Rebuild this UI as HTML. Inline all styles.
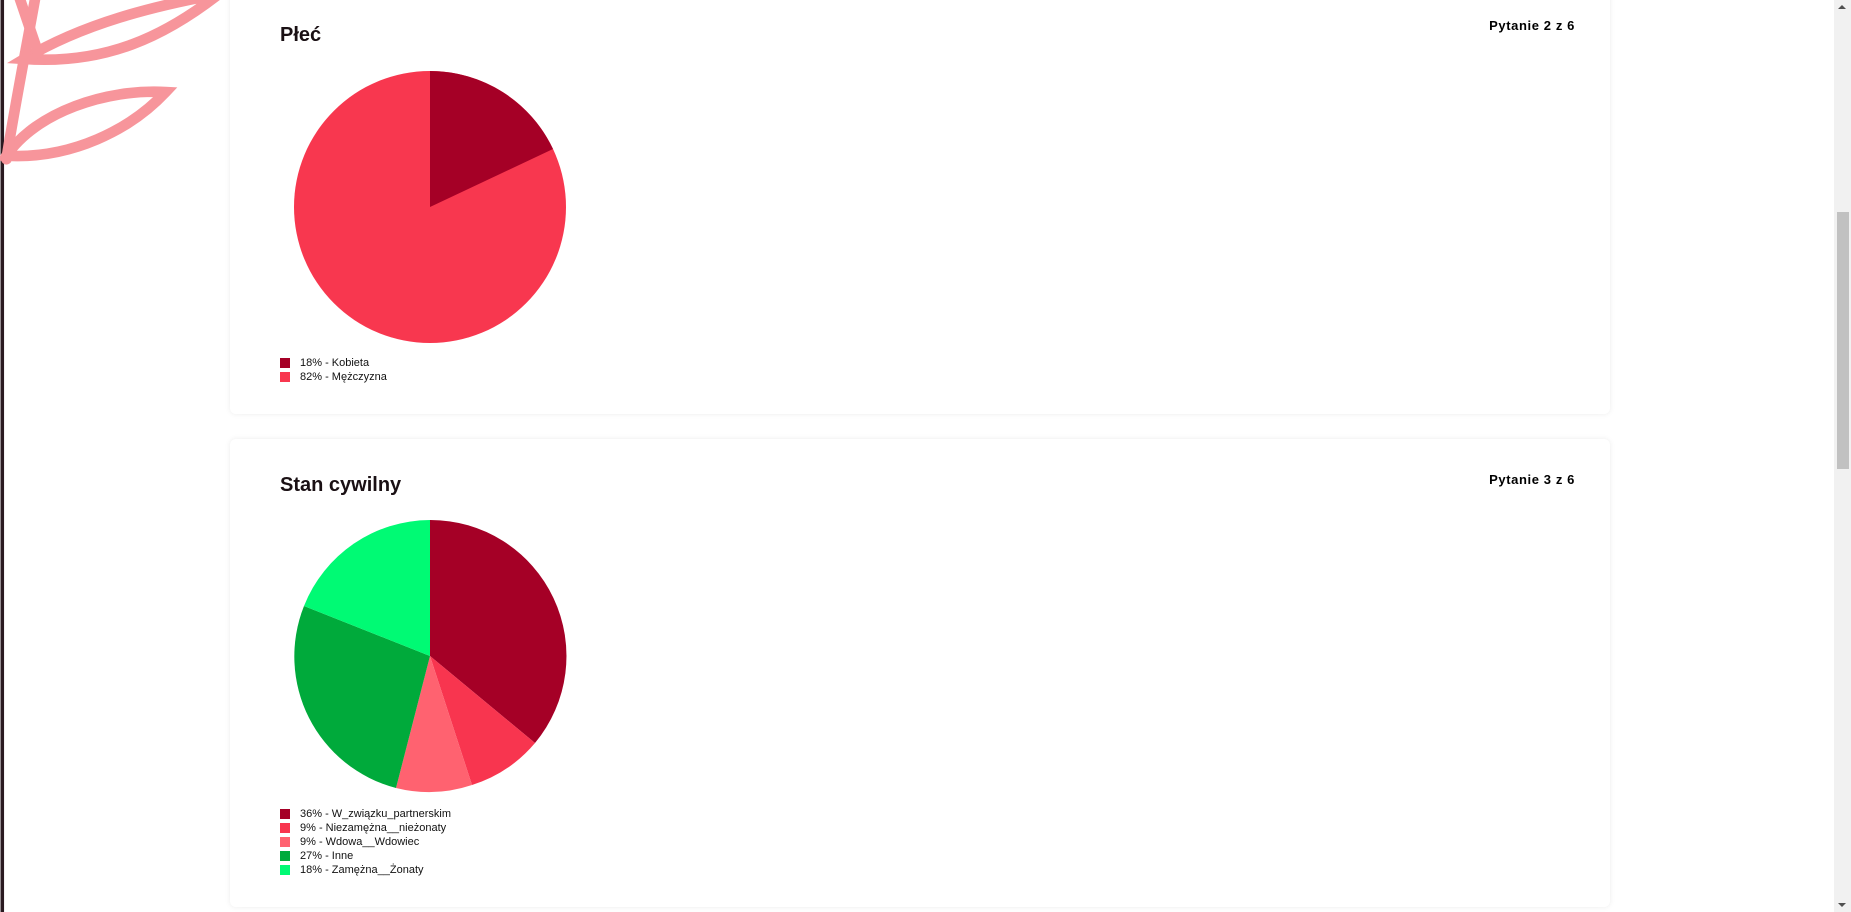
<!DOCTYPE html>
<html><head><meta charset="utf-8"><style>
html,body{margin:0;padding:0;width:1851px;height:912px;overflow:hidden;background:#fff;font-family:"Liberation Sans",sans-serif;color:#111;}
.card{position:absolute;left:230px;width:1380px;background:#fff;border-radius:6px;box-shadow:0 0 6px rgba(0,0,0,0.08);}
.t{position:absolute;left:50px;font-size:20px;font-weight:bold;color:#1a1014;}
.q{position:absolute;right:35px;font-size:13px;font-weight:bold;color:#000;letter-spacing:0.6px;}
.lg{position:absolute;left:50px;font-size:11px;color:#111;}
.lg div{height:14px;line-height:14px;position:relative;padding-left:20px;}
.lg span{position:absolute;left:0;top:2px;width:10px;height:10px;}
</style></head><body>
<svg style="position:absolute;left:0;top:0" width="1851" height="912" viewBox="0 0 1568 773">
<rect x="0" y="0" width="3" height="773" fill="#2a1a20"/>
<g fill="none" stroke="#f7959b" stroke-width="9" stroke-linecap="round">
<path d="M5,132 C30,95 90,75 140,78 C110,110 60,135 5,132 Z"/>
<path d="M20,50 C70,20 130,5 185,-5 C140,30 90,55 20,50 Z"/>
<path d="M5,135 C12,90 22,40 30,-5"/>
<path d="M15,-5 L32,45"/>
</g>
</svg>
<div class="card" style="top:-10px;height:424px">
 <div class="t" style="top:34px">Płeć</div>
 <div class="q" style="top:28px">Pytanie 2 z 6</div>
 <svg style="position:absolute;left:0;top:10px" width="600" height="360">
  <g transform="translate(-230,0)">
  <circle cx="430" cy="207" r="136" fill="#f8374f"/>
  <path d="M430,207 L430,71 A136,136 0 0 1 553,149 Z" fill="#a50026"/>
  </g>
 </svg>
 <div class="lg" style="top:366px">
  <div><span style="background:#a50026"></span>18% - Kobieta</div>
  <div><span style="background:#f8374f"></span>82% - Mężczyzna</div>
 </div>
</div>
<div class="card" style="top:439px;height:468px">
 <div class="t" style="top:35px">Stan cywilny</div>
 <div class="q" style="top:33px">Pytanie 3 z 6</div>
 <svg style="position:absolute;left:0;top:0" width="600" height="360">
  <g transform="translate(-230,-439)">
  <path d="M430,656 L430,520 A136,136 0 0 1 535,743 Z" fill="#a50026"/>
  <path d="M430,656 L535,743 A136,136 0 0 1 472,785 Z" fill="#f8354f"/>
  <path d="M430,656 L472,785 A136,136 0 0 1 396,788 Z" fill="#ff6270"/>
  <path d="M430,656 L396,788 A136,136 0 0 1 304,606 Z" fill="#00aa3b"/>
  <path d="M430,656 L304,606 A136,136 0 0 1 430,520 Z" fill="#00fa74"/>
  </g>
 </svg>
 <div class="lg" style="top:368px">
  <div><span style="background:#a50026"></span>36% - W_związku_partnerskim</div>
  <div><span style="background:#f8354f"></span>9% - Niezamężna__nieżonaty</div>
  <div><span style="background:#ff6270"></span>9% - Wdowa__Wdowiec</div>
  <div><span style="background:#00aa3b"></span>27% - Inne</div>
  <div><span style="background:#00fa74"></span>18% - Zamężna__Żonaty</div>
 </div>
</div>
<div style="position:absolute;right:0;top:0;width:17px;height:912px;background:#f1f1f1"></div>
<div style="position:absolute;right:2px;top:212px;width:12px;height:257px;background:#c1c1c1"></div>
<div style="position:absolute;right:5px;top:5px;width:0;height:0;border-left:4px solid transparent;border-right:4px solid transparent;border-bottom:4px solid #505050"></div>
<div style="position:absolute;right:5px;bottom:5px;width:0;height:0;border-left:4px solid transparent;border-right:4px solid transparent;border-top:4px solid #505050"></div>
</body></html>
